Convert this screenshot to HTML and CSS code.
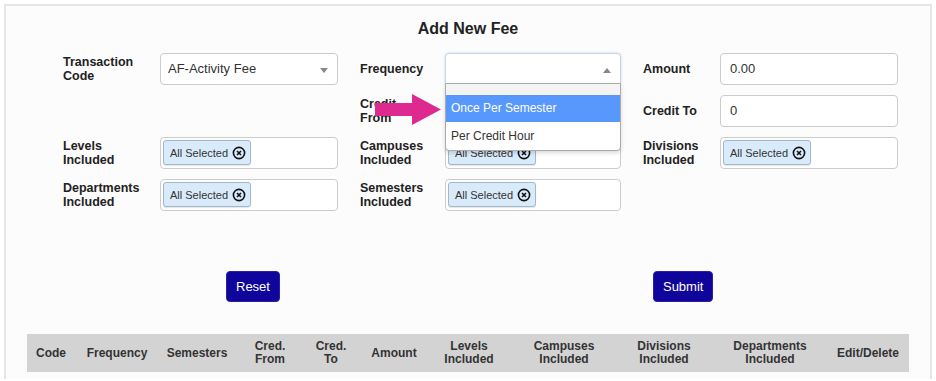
FILE: index.html
```html
<!DOCTYPE html>
<html lang="en">
  <head>
    <meta charset="UTF-8" />
    <meta name="viewport" content="width=device-width, initial-scale=1.0" />
    <title>Add New Fee</title>
    <link rel="stylesheet" href="styles.css">
  </head>
  <body>
    <div class="panel">
      <h2 class="title">Add New Fee</h2>

      <div class="form-grid">
        <div class="field">
          <label>Transaction<br>Code</label>
          <div class="select">AF-Activity Fee<span class="caret down"></span></div>
        </div>
        <div class="field freq">
          <label>Frequency</label>
          <div class="select open"><span class="caret up"></span></div>
          <ul class="dropdown">
            <li class="blank"></li>
            <li class="active">Once Per Semester</li>
            <li>Per Credit Hour</li>
          </ul>
        </div>
        <div class="field">
          <label>Amount</label>
          <div class="input">0.00</div>
        </div>

        <div class="field"></div>
        <div class="field">
          <label>Credit<br>From</label>
          <div class="input"></div>
        </div>
        <div class="field">
          <label>Credit To</label>
          <div class="input">0</div>
        </div>

        <div class="field">
          <label>Levels<br>Included</label>
          <div class="multi"><span class="chip">All Selected <svg class="chip-x" viewBox="0 0 14 14"><circle cx="7" cy="7" r="5.6"/><path d="M5 5l4 4M9 5l-4 4"/></svg></span></div>
        </div>
        <div class="field">
          <label>Campuses<br>Included</label>
          <div class="multi"><span class="chip">All Selected <svg class="chip-x" viewBox="0 0 14 14"><circle cx="7" cy="7" r="5.6"/><path d="M5 5l4 4M9 5l-4 4"/></svg></span></div>
        </div>
        <div class="field">
          <label>Divisions<br>Included</label>
          <div class="multi"><span class="chip">All Selected <svg class="chip-x" viewBox="0 0 14 14"><circle cx="7" cy="7" r="5.6"/><path d="M5 5l4 4M9 5l-4 4"/></svg></span></div>
        </div>

        <div class="field">
          <label>Departments<br>Included</label>
          <div class="multi"><span class="chip">All Selected <svg class="chip-x" viewBox="0 0 14 14"><circle cx="7" cy="7" r="5.6"/><path d="M5 5l4 4M9 5l-4 4"/></svg></span></div>
        </div>
        <div class="field">
          <label>Semesters<br>Included</label>
          <div class="multi"><span class="chip">All Selected <svg class="chip-x" viewBox="0 0 14 14"><circle cx="7" cy="7" r="5.6"/><path d="M5 5l4 4M9 5l-4 4"/></svg></span></div>
        </div>
        <div class="field"></div>

        <!-- callout arrow pointing at the dropdown option -->
        <svg class="callout" viewBox="0 0 66 31">
          <polygon points="0,9 37,9 37,0 66,15.5 37,31 37,22 0,22" />
        </svg>
      </div>

      <div class="actions">
        <button>Reset</button>
        <button>Submit</button>
      </div>

      <table class="fees">
        <colgroup>
          <col style="width:48px"><col style="width:84px"><col style="width:76px">
          <col style="width:70px"><col style="width:52px"><col style="width:74px">
          <col style="width:76px"><col style="width:114px"><col style="width:86px">
          <col style="width:126px"><col>
        </colgroup>
        <thead>
          <tr>
            <th>Code</th>
            <th>Frequency</th>
            <th>Semesters</th>
            <th>Cred.<br>From</th>
            <th>Cred.<br>To</th>
            <th>Amount</th>
            <th>Levels<br>Included</th>
            <th>Campuses<br>Included</th>
            <th>Divisions<br>Included</th>
            <th>Departments<br>Included</th>
            <th>Edit/Delete</th>
          </tr>
        </thead>
      </table>
    </div>
  </body>
</html>
```

FILE: styles.css
```css
body {
    margin: 0;
    background-color: #fff;
    font-family: "Liberation Sans", Arial, sans-serif;
    color: #333;
}
.panel {
    margin: 4px 4px 0 4px;
    border: 2px solid #e6e6e6;
    border-bottom: none;
    background-color: #fcfcfc;
    height: 375px;
    box-sizing: border-box;
}
.title {
    margin: 13px 0 0;
    font-size: 16px;
    line-height: 20px;
    text-align: center;
    color: #222;
}
.form-grid {
    position: relative;
    display: grid;
    grid-template-columns: 275px 261px 255px;
    grid-auto-rows: 32px;
    column-gap: 22px;
    row-gap: 10px;
    margin: 14px 0 0 57px;
}
.field {
    position: relative;
    display: flex;
    align-items: center;
}
.field label {
    flex: 0 0 auto;
    font-size: 12.5px;
    font-weight: bold;
    line-height: 14px;
    color: #222;
}
.form-grid > .field:nth-child(3n+1) label {
    width: 97px;
}
.form-grid > .field:nth-child(3n+2) label {
    width: 85px;
}
.form-grid > .field:nth-child(3n) label {
    width: 77px;
}
.select, .input, .multi {
    position: relative;
    flex: 1;
    height: 32px;
    box-sizing: border-box;
    border: 1px solid #ccc;
    border-radius: 4px;
    background-color: #fff;
    font-size: 13px;
    line-height: 30px;
    padding: 0 7px;
    color: #333;
}
.input {
    padding: 0 9px;
}
.select.open {
    border-color: #c6d4e4;
    border-radius: 4px 4px 0 0;
    box-shadow: 0 0 3px rgba(120, 160, 210, 0.35);
}
.caret {
    position: absolute;
    right: 9px;
    top: 14px;
    width: 0;
    height: 0;
    border-left: 4px solid transparent;
    border-right: 4px solid transparent;
}
.caret.down {
    border-top: 5px solid #888;
}
.caret.up {
    top: 14px;
    border-bottom: 5px solid #888;
}
.dropdown {
    position: absolute;
    left: 85px;
    right: 0;
    top: 30px;
    margin: 0;
    padding: 0;
    list-style: none;
    background-color: #fff;
    border: 1px solid #aaa;
    border-radius: 0 0 4px 4px;
    box-shadow: 0 2px 4px rgba(0, 0, 0, 0.15);
    z-index: 5;
}
.dropdown li {
    height: 28px;
    line-height: 28px;
    padding-left: 5px;
    font-size: 12px;
    color: #333;
}
.dropdown li.blank {
    height: 11px;
    background-color: #f4f4f4;
}
.dropdown li.active {
    height: 27px;
    line-height: 27px;
    background-color: #5897fb;
    color: #fff;
}
.multi {
    padding: 2px;
    line-height: normal;
}
.chip {
    display: inline-flex;
    align-items: center;
    height: 25px;
    box-sizing: border-box;
    padding: 0 4px 0 6px;
    border: 1px solid #a2b7cc;
    border-radius: 3px;
    background-color: #d9ebfb;
    font-size: 11px;
    color: #333;
    box-shadow: 0 1px 1px rgba(0, 0, 0, 0.1);
}
.chip-x {
    width: 14px;
    height: 14px;
    margin-left: 4px;
    fill: none;
    stroke: #111;
    stroke-width: 1.6;
}
.callout {
    position: absolute;
    left: 312px;
    top: 41px;
    width: 66px;
    height: 31px;
    fill: #de2a90;
    z-index: 6;
}
.actions {
    display: flex;
    gap: 373px;
    margin: 60px 0 0 220px;
}
.actions button {
    height: 31px;
    padding: 0 9px;
    border: 1px solid #2a1f9f;
    border-radius: 4px;
    background-color: #0f059c;
    color: #fff;
    font-family: "Liberation Sans", Arial, sans-serif;
    font-size: 13px;
}
.fees {
    margin: 32px 0 0 21px;
    width: 882px;
    border-collapse: collapse;
    table-layout: fixed;
    background-color: #d3d3d3;
}
.fees th {
    height: 38px;
    padding: 0;
    font-size: 12px;
    line-height: 13px;
    font-weight: bold;
    color: #333;
    text-align: center;
}
.fees th:last-child {
    padding-right: 6px;
}
```
